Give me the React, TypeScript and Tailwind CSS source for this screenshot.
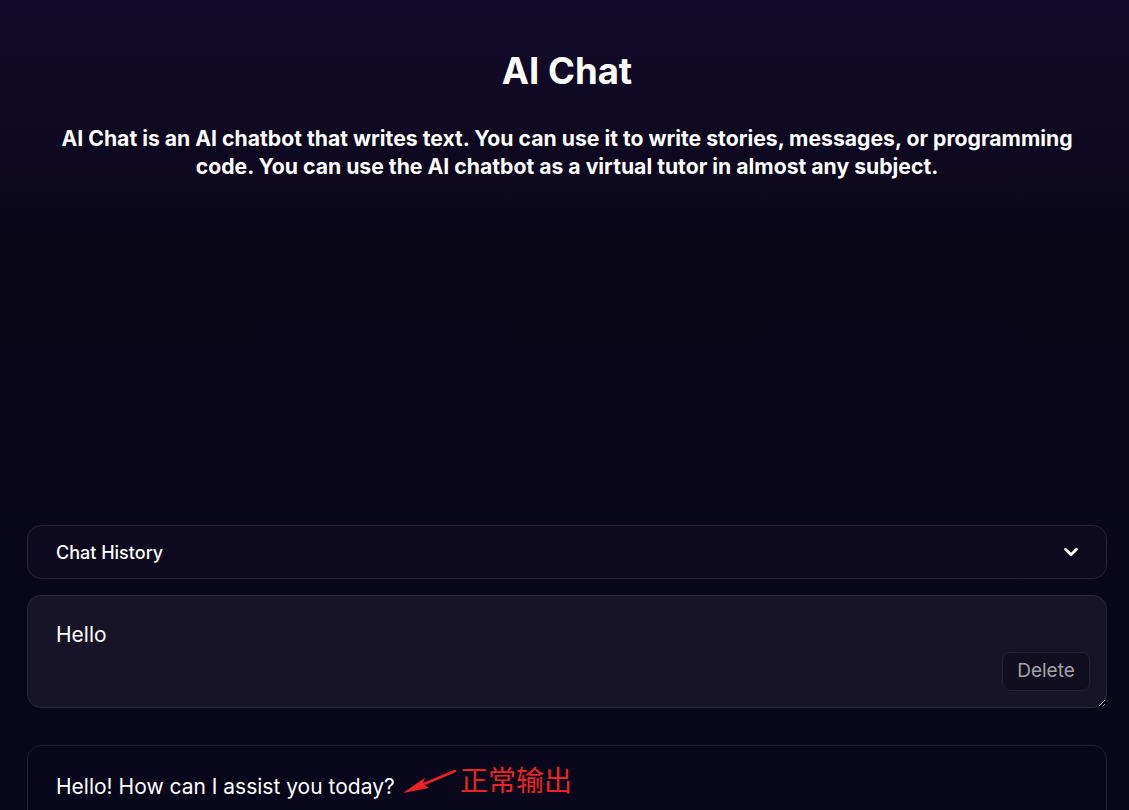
import { ChevronDown } from "lucide-react"

const App = () => {
    return (
        <div
            className="h-[810px] w-full overflow-hidden bg-gradient-to-b from-[#140b2c] via-[#0a0719] via-30% to-[#08061a] text-white"
            style={{ fontFamily: "Inter, 'Noto Sans CJK SC', sans-serif" }}
        >
            <div className="pl-[27px] pr-[22px] pt-[50px]">
                <h1 className="text-center text-[36.5px] font-bold leading-[42px]">AI Chat</h1>
                <p className="mx-auto mt-[32px] max-w-[1040px] text-center text-[21.2px] font-bold leading-[28px]">
                    AI Chat is an AI chatbot that writes text. You can use it to write stories, messages, or programming
                    code. You can use the AI chatbot as a virtual tutor in almost any subject.
                </p>

                {/* chat area (empty) */}
                <div className="h-[345px]" />

                <div className="flex h-[54px] items-center justify-between rounded-[14px] border border-[#26233a] bg-[#0d0a1f] pl-[28px] pr-[24px]">
                    <span className="text-[18px] font-medium">Chat History</span>
                    <ChevronDown size={22} strokeWidth={3} />
                </div>

                <div className="relative mt-[16px]">
                    <textarea
                        defaultValue="Hello"
                        className="block h-[113px] w-full resize-y rounded-[14px] border border-[#2a2740] bg-[#161426] px-[28px] pt-[25px] text-[21px] leading-[28px] text-white outline-none"
                    />
                    <button className="absolute bottom-[17px] right-[17px] h-[39px] w-[88px] rounded-lg border border-[#252236] bg-[#110f1f] text-[19px] text-[#a3a2ab]">
                        Delete
                    </button>
                </div>

                <div className="relative mt-[37px] h-[120px] rounded-[14px] border border-[#221f33] bg-[#08061a] px-[28px] pt-[27px]">
                    <p className="text-[21px] leading-[28px]">Hello! How can I assist you today?</p>

                    {/* red annotation */}
                    <svg className="absolute left-[346px] top-[13px]" width="90" height="40" viewBox="0 0 90 40">
                        <line x1="50" y1="25" x2="81" y2="12" stroke="#ec2424" strokeWidth="2.5" strokeLinecap="round" />
                        <polygon points="29,34 50.9,18.8 49,25 55.1,29" fill="#ec2424" />
                    </svg>
                    <span
                        className="absolute left-[432px] top-[15px] text-[28px] leading-[36px] text-[#ec2424]"
                        style={{ fontFamily: "'Noto Sans CJK SC', sans-serif" }}
                    >
                        正常输出
                    </span>
                </div>
            </div>
        </div>
    )
}

export default App
